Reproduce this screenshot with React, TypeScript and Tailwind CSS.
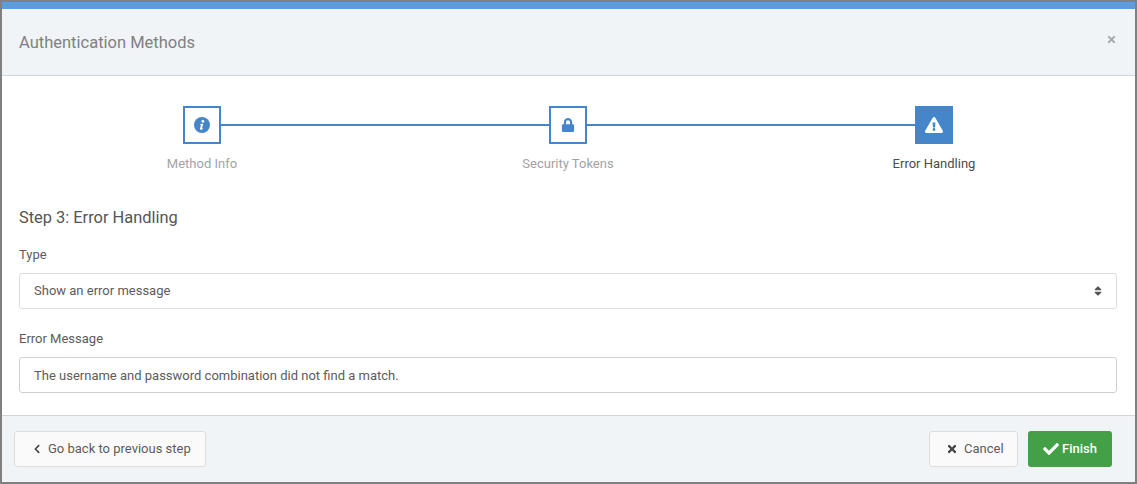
import React from 'react';
import { FaLock, FaExclamationTriangle, FaCheck, FaTimes, FaChevronLeft, FaSort } from 'react-icons/fa';

function InfoIcon() {
  return (
    <svg viewBox="0 0 16 16" className="w-4 h-4">
      <circle cx="8" cy="8" r="8" fill="currentColor" />
      <circle cx="8.9" cy="4.3" r="1.35" fill="#fff" />
      <path
        d="M6.3 7.1 L9.3 6.7 L8 11.2 C7.9 11.6 8.2 11.7 8.9 11.2 L9.2 11.7 C8.2 12.6 7.4 12.9 6.7 12.8 C6 12.7 5.8 12.2 6 11.5 L7 8.1 L6.2 7.9 Z"
        fill="#fff"
      />
    </svg>
  );
}

const steps = [
  { label: 'Method Info', icon: <InfoIcon />, active: false },
  { label: 'Security Tokens', icon: <FaLock className="w-[14px] h-[14px]" />, active: false },
  { label: 'Error Handling', icon: <FaExclamationTriangle className="w-[18px] h-[18px]" />, active: true },
];

function App() {
  return (
    <div className="w-[1137px] h-[484px] overflow-hidden border-2 border-[#808080] bg-white font-['Roboto',sans-serif] text-[13px] text-[#5c5c5c]">
      <div className="flex box-content h-[66px] items-center justify-between border-t-[7px] border-t-[#5a9de3] border-b border-b-[#d5d5d9] bg-[#f1f4f7] pl-[17px] pr-[18px]">
        <h1 className="pt-[2px] text-[16.5px] text-[#808080]">Authentication Methods</h1>
        <FaTimes className="mb-[5px] w-[11px] h-[11px] text-[#aaa]" />
      </div>

      <div className="pl-[17px] pr-[18px]">
        <div className="grid grid-cols-3 pt-[30px]">
          {steps.map((step, i) => (
            <div key={step.label} className="relative flex flex-col items-center">
              {i < steps.length - 1 && (
                <div className="absolute left-1/2 top-[18px] h-[2px] w-full bg-[#4586cb]" />
              )}
              <div
                className={
                  step.active
                    ? 'relative z-10 flex h-[38px] w-[38px] items-center justify-center border-2 border-[#4586cb] bg-[#4586cb] text-white'
                    : 'relative z-10 flex h-[38px] w-[38px] items-center justify-center border-2 border-[#4586cb] bg-white text-[#4586cb]'
                }
              >
                {step.icon}
              </div>
              <div className={step.active ? 'mt-[12px] leading-[16px] text-[#4c4c4c]' : 'mt-[12px] leading-[16px] text-[#a3a3a3]'}>
                {step.label}
              </div>
            </div>
          ))}
        </div>

        <h2 className="mt-[36px] text-[16.4px] leading-[20px] text-[#555]">Step 3: Error Handling</h2>

        <label className="mt-[19px] block leading-[16px]">Type</label>
        <div className="mt-[10px] flex h-[36px] items-center justify-between rounded-[3px] border border-[#ddd] pl-[14px] pr-[13px]">
          <span>Show an error message</span>
          <FaSort className="w-[10px] h-[12px] text-[#555]" />
        </div>

        <label className="mt-[22px] block leading-[16px]">Error Message</label>
        <input
          readOnly
          value="The username and password combination did not find a match."
          className="mt-[10px] block h-[36px] w-full rounded-[3px] border border-[#d0d0d0] px-[14px] outline-none"
        />
      </div>

      <div className="mt-[22px] flex h-[67px] items-center justify-between border-t border-[#d5d5d9] bg-[#f1f4f7] pl-[12px] pr-[23px]">
        <button className="flex h-[36px] w-[192px] items-center rounded-[3px] border border-[#ddd] bg-[#fafafa] pl-[18px]">
          <FaChevronLeft className="mr-[7px] w-[8px] h-[10px] text-[#444]" />
          Go back to previous step
        </button>
        <div className="flex gap-[10px]">
          <button className="flex h-[36px] w-[89px] items-center rounded-[3px] border border-[#ddd] bg-[#fafafa] pl-[16px]">
            <FaTimes className="mr-[6px] w-[12px] h-[12px] text-[#444]" />
            Cancel
          </button>
          <button className="flex h-[36px] w-[84px] items-center rounded-[3px] bg-[#43a047] pl-[14px] font-medium text-white">
            <FaCheck className="mr-[2px] w-[18px] h-[16px]" />
            Finish
          </button>
        </div>
      </div>
    </div>
  );
}

export default App;
